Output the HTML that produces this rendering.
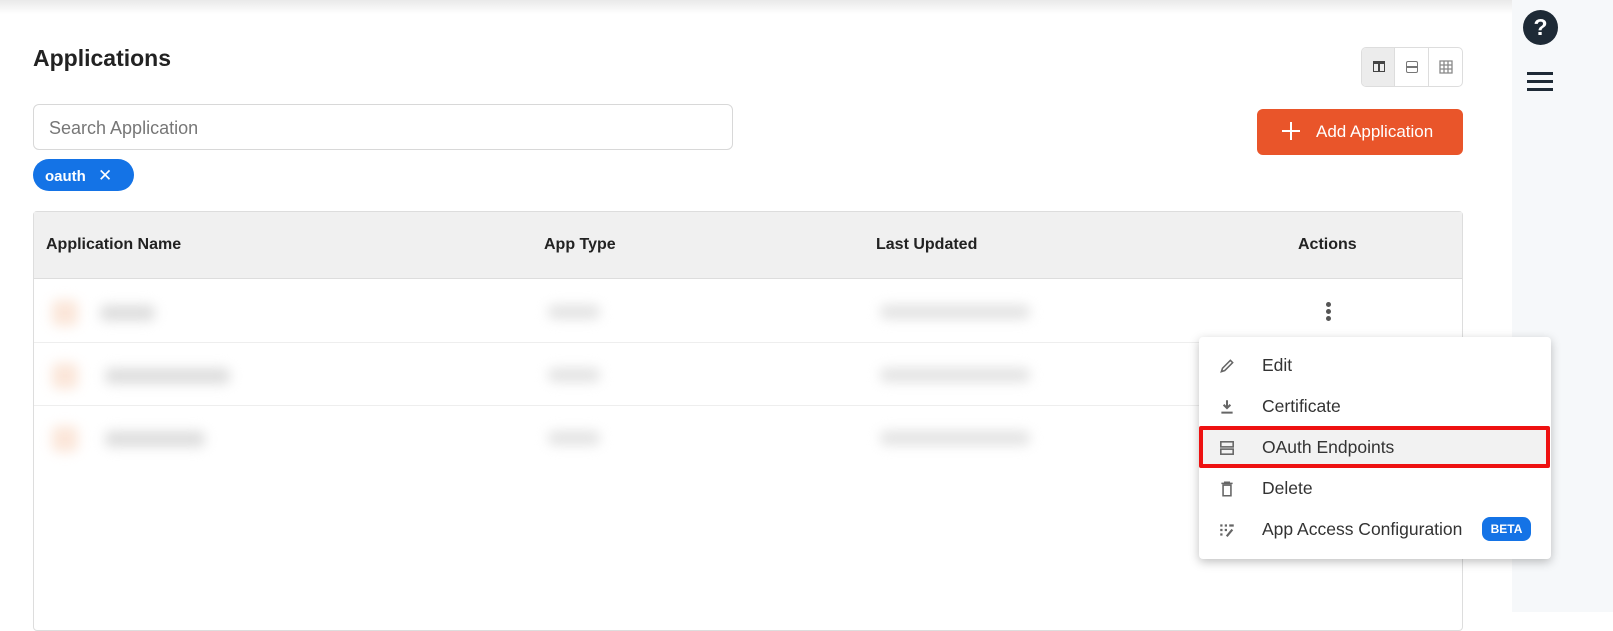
<!DOCTYPE html>
<html><head><style>
*{box-sizing:border-box;margin:0;padding:0}
body{width:1613px;height:612px;overflow:hidden;background:#fff;font-family:"Liberation Sans",sans-serif;color:#222;position:relative}
.abs{position:absolute}
.topsh{left:0;top:0;width:1512px;height:14px;background:linear-gradient(#e9e9e9,#fff)}
.side{left:1512px;top:0;width:101px;height:612px;background:#f6f8fa}
.blur{position:absolute;filter:blur(6px);border-radius:6px}
.th{position:absolute;top:236px;font-size:16px;font-weight:bold;color:#222}
.mi{position:absolute;left:1262px;font-size:17.5px;color:#333}
.ic{position:absolute;left:1218px}
</style></head><body>
<div class="abs topsh"></div>
<div class="abs side"></div>
<div class="abs" style="left:1523px;top:10px;width:35px;height:35px;border-radius:50%;background:#1e2a36;color:#fff;font-weight:bold;font-size:23px;text-align:center;line-height:35px">?</div>
<div class="abs" style="left:1527px;top:72px;width:26px;height:3px;background:#1e2a36;box-shadow:0 8px 0 #1e2a36,0 16px 0 #1e2a36"></div>

<div class="abs" style="left:33px;top:45px;font-size:23px;font-weight:bold;color:#222">Applications</div>

<div class="abs" style="left:1361px;top:47px;width:102px;height:40px;border:1px solid #ddd;border-radius:5px;overflow:hidden;display:flex">
<div style="width:34px;background:#ececec;border-right:1px solid #ddd;position:relative"><div class="abs" style="left:11px;top:13px;width:12px;height:11px;border:1.5px solid #444;border-top-width:3px"></div><div class="abs" style="left:16px;top:15px;width:1.5px;height:8px;background:#444"></div></div>
<div style="width:34px;border-right:1px solid #ddd;position:relative"><div class="abs" style="left:11px;top:13px;width:12px;height:12px;border:1.5px solid #777;border-radius:2px"></div><div class="abs" style="left:11px;top:18px;width:12px;height:1.5px;background:#777"></div></div>
<div style="width:34px;position:relative"><svg class="abs" style="left:10px;top:12px" width="14" height="14" viewBox="0 0 14 14"><path d="M1 1h12v12H1zM1 5h12M1 9h12M5 1v12M9 1v12" fill="none" stroke="#888" stroke-width="1.3"/></svg></div>
</div>

<div class="abs" style="left:33px;top:104px;width:700px;height:46px;border:1px solid #d8d8d8;border-radius:6px;padding:13px 15px;font-size:18px;color:#777">Search Application</div>
<div class="abs" style="left:33px;top:159px;width:101px;height:32px;border-radius:16px;background:#1473e6;color:#fff;font-size:15px;font-weight:bold;padding:7px 12px">oauth <span style="font-weight:normal;margin-left:8px;font-size:17px">✕</span></div>

<div class="abs" style="left:1257px;top:109px;width:206px;height:46px;border-radius:6px;background:#e9552a;color:#fff;font-size:17px;padding:13px 0 0 59px">Add Application</div>
<svg class="abs" style="left:1281px;top:121px" width="20" height="20" viewBox="0 0 20 20"><path d="M10 1v18M1 10h18" stroke="#fff" stroke-width="2"/></svg>

<div class="abs" style="left:33px;top:211px;width:1430px;height:420px;border:1px solid #ddd;border-radius:4px"></div>
<div class="abs" style="left:34px;top:212px;width:1428px;height:67px;background:#f0f0f0;border-bottom:1px solid #ddd"></div>
<div class="th" style="left:46px">Application Name</div>
<div class="th" style="left:544px">App Type</div>
<div class="th" style="left:876px">Last Updated</div>
<div class="th" style="left:1298px">Actions</div>
<div class="abs" style="left:34px;top:342px;width:1428px;height:1px;background:#eee"></div>
<div class="abs" style="left:34px;top:405px;width:1428px;height:1px;background:#eee"></div>

<div class="blur" style="left:52px;top:300px;width:26px;height:26px;background:#fbe6d9"></div>
<div class="blur" style="left:100px;top:305px;width:55px;height:16px;background:#ddd"></div>
<div class="blur" style="left:52px;top:363px;width:26px;height:26px;background:#fbe6d9"></div>
<div class="blur" style="left:105px;top:368px;width:125px;height:16px;background:#ddd"></div>
<div class="blur" style="left:52px;top:426px;width:26px;height:26px;background:#fbe6d9"></div>
<div class="blur" style="left:105px;top:431px;width:100px;height:16px;background:#ddd"></div>
<div class="blur" style="left:548px;top:305px;width:52px;height:14px;background:#e2e2e2"></div>
<div class="blur" style="left:548px;top:368px;width:52px;height:14px;background:#e2e2e2"></div>
<div class="blur" style="left:548px;top:431px;width:52px;height:14px;background:#e2e2e2"></div>
<div class="blur" style="left:880px;top:305px;width:150px;height:14px;background:#e2e2e2"></div>
<div class="blur" style="left:880px;top:368px;width:150px;height:14px;background:#e2e2e2"></div>
<div class="blur" style="left:880px;top:431px;width:150px;height:14px;background:#e2e2e2"></div>

<div class="abs" style="left:1326px;top:302px;width:5px;height:5px;border-radius:50%;background:#555;box-shadow:0 7px 0 #555,0 14px 0 #555"></div>

<div class="abs" style="left:1199px;top:337px;width:352px;height:222px;background:#fff;border-radius:4px;box-shadow:0 3px 10px rgba(0,0,0,.25)"></div>
<div class="abs" style="left:1199px;top:426px;width:351px;height:42px;background:#f2f2f2;border:4px solid #ee1111;border-radius:2px"></div>
<svg class="ic" style="top:357px" width="18" height="18" viewBox="0 0 16 16"><path d="M3 13l1-3 7-7 2 2-7 7z" fill="none" stroke="#666" stroke-width="1.4"/></svg>
<svg class="ic" style="top:398px" width="18" height="18" viewBox="0 0 16 16"><path d="M8 2v7M5 6l3 3 3-3M3 13h10" fill="none" stroke="#666" stroke-width="1.8"/></svg>
<svg class="ic" style="top:439px" width="18" height="18" viewBox="0 0 16 16"><rect x="2.5" y="2.5" width="11" height="4.5" fill="none" stroke="#666" stroke-width="1.4"/><rect x="2.5" y="9" width="11" height="4.5" fill="none" stroke="#666" stroke-width="1.4"/></svg>
<svg class="ic" style="top:480px" width="18" height="18" viewBox="0 0 16 16"><path d="M3 3h10M6 3V2h4v1M4.5 4.5h7V14h-7z" fill="none" stroke="#666" stroke-width="1.4"/></svg>
<svg class="ic" style="top:521px" width="18" height="18" viewBox="0 0 16 16"><g fill="#666"><rect x="2" y="3" width="2" height="2"/><rect x="6" y="3" width="2" height="2"/><rect x="10" y="3" width="4" height="2"/><rect x="2" y="7" width="2" height="2"/><rect x="6" y="7" width="2" height="2"/><rect x="2" y="11" width="2" height="2"/><path d="M7 13l5-6 1.5 1.2-5 6z"/></g></svg>
<div class="mi" style="top:355px">Edit</div>
<div class="mi" style="top:396px">Certificate</div>
<div class="mi" style="top:437px">OAuth Endpoints</div>
<div class="mi" style="top:478px">Delete</div>
<div class="mi" style="top:519px">App Access Configuration</div>
<div class="abs" style="left:1482px;top:517px;width:49px;height:24px;border-radius:8px;background:#1473e6;color:#fff;font-size:12px;font-weight:bold;text-align:center;line-height:24px">BETA</div>
</body></html>
